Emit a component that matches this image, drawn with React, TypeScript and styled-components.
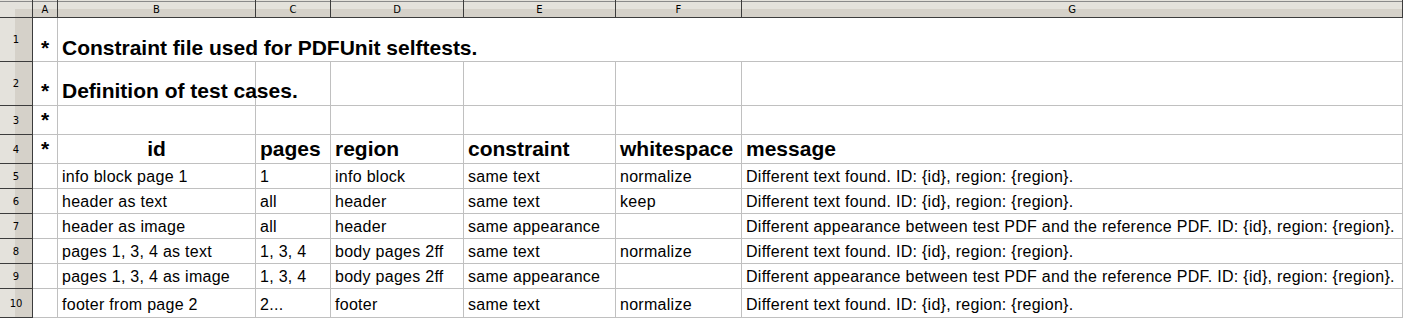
import React from "react";
import styled, { createGlobalStyle } from "styled-components";

const Global = createGlobalStyle`
  html, body { margin: 0; padding: 0; background: #ffffff; }
  body { font-family: "Liberation Sans", Arial, sans-serif; }
`;

const COLS = [33, 25, 198, 75, 133, 152, 126, 661];
const ROWS = [18, 44, 44, 29, 29, 25, 25, 25, 25, 25, 29];

const Sheet = styled.div`
  display: grid;
  grid-template-columns: ${COLS.map((c) => `${c}px`).join(" ")};
  grid-template-rows: ${ROWS.map((r) => `${r}px`).join(" ")};
  width: 1403px;
  background: #ffffff;
`;

const Corner = styled.div`
  box-sizing: border-box;
  border-right: 1px solid #3c3c3c;
  border-bottom: 1px solid #3c3c3c;
  background:
    linear-gradient(to bottom, transparent 0 1px, #8a8a8a 1px 2px, transparent 2px),
    linear-gradient(to right, #e4e2dc 0 15px, transparent 15px),
    linear-gradient(to bottom, #e4e2dc 0 9px, #d5d1c9 9px);
`;

const ColHead = styled.div`
  box-sizing: border-box;
  display: flex;
  align-items: center;
  justify-content: center;
  padding-top: 2px;
  border-right: 1px solid #3c3c3c;
  border-bottom: 1px solid #3c3c3c;
  background: linear-gradient(
    to bottom,
    #e4e2dc 0 1px,
    #8a8a8a 1px 2px,
    #e4e2dc 2px 9px,
    #d5d1c9 9px
  );
  font-family: "DejaVu Sans", Tahoma, sans-serif;
  font-size: 10px;
  color: #000;
`;

const RowHead = styled.div`
  box-sizing: border-box;
  display: flex;
  align-items: center;
  justify-content: center;
  border-right: 1px solid #3c3c3c;
  border-bottom: 1px solid #3c3c3c;
  background: linear-gradient(to right, #e4e2dc 0 15px, #d5d1c9 15px);
  font-family: "DejaVu Sans", Tahoma, sans-serif;
  font-size: 10px;
  color: #000;
`;

const Cell = styled.div<{ $bold?: boolean; $center?: boolean; $pb?: number; $span?: number }>`
  box-sizing: border-box;
  min-width: 0;
  display: flex;
  align-items: flex-end;
  justify-content: ${(p) => (p.$center ? "center" : "flex-start")};
  padding: 0 4px ${(p) => p.$pb ?? 2}px 4px;
  border-right: 1px solid #c0c0c0;
  border-bottom: 1px solid #c0c0c0;
  grid-column: ${(p) => (p.$span ? `span ${p.$span}` : "auto")};
  white-space: nowrap;
  overflow: visible;
  color: #000;
  font-family: "Liberation Sans", Arial, sans-serif;
  font-size: ${(p) => (p.$bold ? "21px" : "16px")};
  font-weight: ${(p) => (p.$bold ? 700 : 400)};
  line-height: ${(p) => (p.$bold ? "24px" : "18px")};
  letter-spacing: ${(p) => (p.$bold ? "0" : "0.28px")};
`;

const Star = styled(Cell)`
  padding-left: 0;
  padding-right: 0;
`;

const LETTERS = ["A", "B", "C", "D", "E", "F", "G"];

type Row = {
  star?: boolean;
  cells: string[];
  bold?: boolean;
  pb?: number;
};

const headers = ["id", "pages", "region", "constraint", "whitespace", "message"];

const data: string[][] = [
  ["info block page 1", "1", "info block", "same text", "normalize", "Different text found. ID: {id}, region: {region}."],
  ["header as text", "all", "header", "same text", "keep", "Different text found. ID: {id}, region: {region}."],
  ["header as image", "all", "header", "same appearance", "", "Different appearance between test PDF and the reference PDF. ID: {id}, region: {region}."],
  ["pages 1, 3, 4 as text", "1, 3, 4", "body pages 2ff", "same text", "normalize", "Different text found. ID: {id}, region: {region}."],
  ["pages 1, 3, 4 as image", "1, 3, 4", "body pages 2ff", "same appearance", "", "Different appearance between test PDF and the reference PDF. ID: {id}, region: {region}."],
  ["footer from page 2", "2...", "footer", "same text", "normalize", "Different text found. ID: {id}, region: {region}."],
];

export default function App() {
  const rows: Row[] = [
    { star: true, cells: ["Definition of test cases.", "", "", "", "", ""], bold: true, pb: 2 },
    { star: true, cells: ["", "", "", "", "", ""], bold: true, pb: 2 },
    { star: true, cells: headers, bold: true, pb: 2 },
    ...data.map((d, i) => ({ cells: d, pb: i === 5 ? 3 : 2 })),
  ];

  return (
    <>
      <Global />
      <Sheet>
        <Corner />
        {LETTERS.map((l) => (
          <ColHead key={l}>{l}</ColHead>
        ))}

        <RowHead>1</RowHead>
        <Star $bold $center $pb={1}>*</Star>
        <Cell $bold $pb={1} $span={6}>
          Constraint file used for PDFUnit selftests.
        </Cell>

        {rows.map((r, ri) => (
          <React.Fragment key={ri}>
            <RowHead>{ri + 2}</RowHead>
            <Star $bold $center $pb={r.pb}>
              {r.star ? "*" : ""}
            </Star>
            {r.cells.map((c, ci) => (
              <Cell
                key={ci}
                $bold={r.bold}
                $pb={r.pb}
                $center={ri === 2 && ci === 0}
              >
                {c}
              </Cell>
            ))}
          </React.Fragment>
        ))}
      </Sheet>
    </>
  );
}
